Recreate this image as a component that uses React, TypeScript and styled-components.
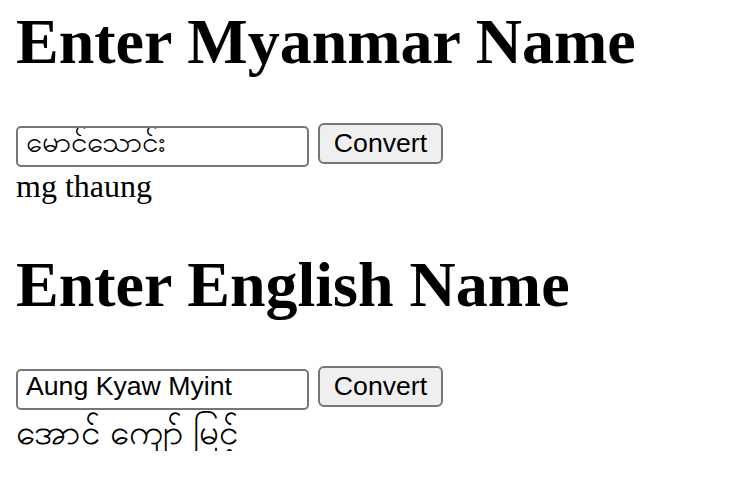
import React, { useState } from "react";
import styled, { createGlobalStyle } from "styled-components";

const Global = createGlobalStyle`
  html, body { margin: 0; padding: 0; background: #ffffff; }
  body { font-family: "Liberation Serif", "Times New Roman", serif; color: #000; }
`;

const Page = styled.div`
  padding: 5px 16px 0 16px;
  font-size: 32px;
  line-height: 36.8px;
`;

const Section = styled.section`
  & + & { margin-top: 42.88px; }
`;

const Title = styled.h1`
  margin: 0 0 42.88px 0;
  font-size: 64px;
  line-height: 73.6px;
  font-weight: bold;
`;

const Row = styled.div`
  display: flex;
  align-items: flex-start;
  gap: 9.3px;
  height: 46.5px;
  padding-top: 2px;
  box-sizing: border-box;
`;

const Field = styled.input<{ $burmese?: boolean }>`
  box-sizing: border-box;
  width: 293px;
  height: 41px;
  margin: 2.4px 0 0 0;
  padding: 0 8px ${(p) => (p.$burmese ? "3px" : "5px")} 8px;
  border: 2px solid #767676;
  border-radius: 5px;
  background: #fff;
  font-family: "Liberation Sans", Arial, sans-serif;
  font-size: ${(p) => (p.$burmese ? "29.5px" : "26.67px")};
  color: #000;
  outline: none;
`;

const Button = styled.button`
  box-sizing: border-box;
  width: 124.4px;
  height: 41px;
  margin: 0;
  padding: 0;
  border: 2px solid #767676;
  border-radius: 6px;
  background: #efefef;
  font-family: "Liberation Sans", Arial, sans-serif;
  font-size: 26.67px;
  color: #000;
  cursor: pointer;
`;

const Output = styled.div<{ $burmese?: boolean }>`
  font-size: ${(p) => (p.$burmese ? "35px" : "32px")};
  line-height: 36.8px;
  padding-top: ${(p) => (p.$burmese ? "4px" : "0")};
`;

function Converter({
  title,
  initial,
  result,
  inputBurmese,
  resultBurmese,
}: {
  title: string;
  initial: string;
  result: string;
  inputBurmese?: boolean;
  resultBurmese?: boolean;
}) {
  const [value, setValue] = useState(initial);
  return (
    <Section>
      <Title>{title}</Title>
      <Row>
        <Field
          type="text"
          $burmese={inputBurmese}
          value={value}
          onChange={(e) => setValue(e.target.value)}
        />
        <Button type="button">Convert</Button>
      </Row>
      <Output $burmese={resultBurmese}>{result}</Output>
    </Section>
  );
}

export default function App() {
  return (
    <>
      <Global />
      <Page>
        <Converter title="Enter Myanmar Name" initial="မောင်သောင်း" result="mg thaung" inputBurmese />
        <Converter title="Enter English Name" initial="Aung Kyaw Myint" result="အောင် ကျော် မြင့်" resultBurmese />
      </Page>
    </>
  );
}
